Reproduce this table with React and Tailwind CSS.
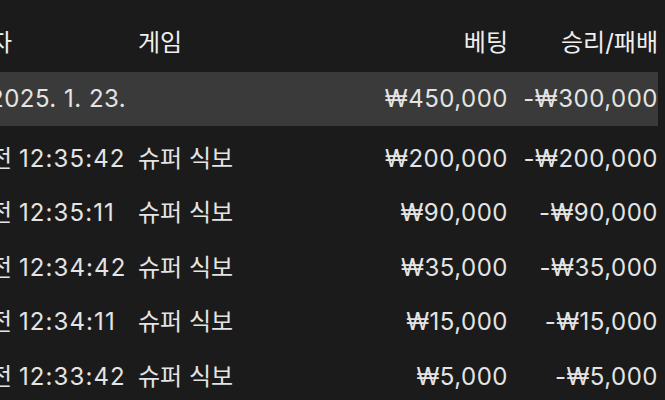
export default function App() {
  const rows = [
    ["오전", "12:35:42", "슈퍼 식보", "₩200,000", "-₩200,000"],
    ["오전", "12:35:11", "슈퍼 식보", "₩90,000", "-₩90,000"],
    ["오전", "12:34:42", "슈퍼 식보", "₩35,000", "-₩35,000"],
    ["오전", "12:34:11", "슈퍼 식보", "₩15,000", "-₩15,000"],
    ["오전", "12:33:42", "슈퍼 식보", "₩5,000", "-₩5,000"],
  ];
  const font = { fontFamily: '"Inter", "Noto Sans CJK KR", sans-serif' };
  return (
    <div className="w-[665px] h-[400px] overflow-hidden bg-[#1b1b1b] text-[#e4e4e4]" style={font}>
      <div className="ml-[-32px] w-[697px] pr-[7px] text-[24px] leading-none">
        <div className="flex h-[72px] items-center pt-[13px] text-[#efefef]">
          <div className="w-[170px] shrink-0">일자</div>
          <div className="flex-1">게임</div>
          <div className="w-[150px] text-right">베팅</div>
          <div className="w-[150px] text-right">승리/패배</div>
        </div>
        <div className="flex h-[54px] items-center bg-[#3a3a3a]">
          <div className="w-[170px] shrink-0 pl-[21px] tracking-[0.5px] whitespace-nowrap">2025. 1. 23.</div>
          <div className="flex-1"></div>
          <div className="w-[150px] text-right tracking-[0.5px]">₩450,000</div>
          <div className="w-[150px] text-right tracking-[0.5px]">-₩300,000</div>
        </div>
        <div className="h-[5.5px]"></div>
        {rows.map((r, i) => (
          <div key={i} className="flex h-[54.5px] items-center">
            <div className="w-[170px] shrink-0 whitespace-nowrap">
              {r[0]} <span className="tracking-[1.1px]">{r[1]}</span>
            </div>
            <div className="flex-1 whitespace-nowrap">{r[2]}</div>
            <div className="w-[150px] text-right tracking-[0.5px]">{r[3]}</div>
            <div className="w-[150px] text-right tracking-[0.5px]">{r[4]}</div>
          </div>
        ))}
      </div>
    </div>
  );
}
